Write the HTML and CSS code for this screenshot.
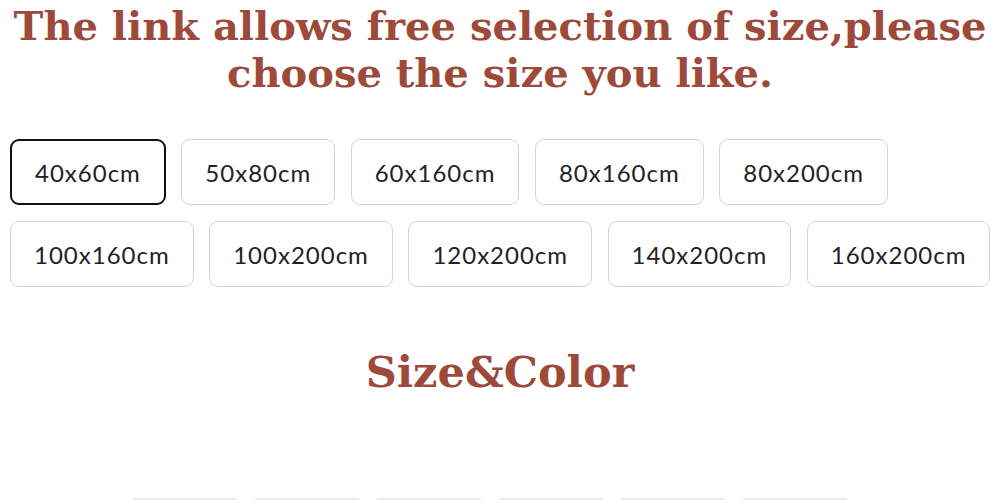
FILE: index.html
```html
<!DOCTYPE html>
<html lang="en">
<head>
    <meta charset="UTF-8">
    <title>Size selection</title>
    <link rel="stylesheet" href="styles.css">
</head>
<body>
    <div class="page">
        <!-- notice at the top -->
        <h1 class="notice">The link allows free selection of size,please<br>choose the size you like.</h1>

        <!-- size options -->
        <div class="sizes">
            <div class="size-row">
                <button class="size-btn active">40x60cm</button>
                <button class="size-btn">50x80cm</button>
                <button class="size-btn">60x160cm</button>
                <button class="size-btn">80x160cm</button>
                <button class="size-btn">80x200cm</button>
            </div>
            <div class="size-row">
                <button class="size-btn">100x160cm</button>
                <button class="size-btn">100x200cm</button>
                <button class="size-btn">120x200cm</button>
                <button class="size-btn">140x200cm</button>
                <button class="size-btn">160x200cm</button>
            </div>
        </div>

        <h2 class="section-title">Size&amp;Color</h2>

        <!-- tops of the swatches below -->
        <div class="swatches">
            <span class="swatch"></span>
            <span class="swatch"></span>
            <span class="swatch"></span>
            <span class="swatch"></span>
            <span class="swatch"></span>
            <span class="swatch"></span>
        </div>
    </div>
</body>
</html>
```

FILE: styles.css
```css
body {
    margin: 0;
    background: #fff;
}
.page {
    width: 1000px;
    height: 500px;
    overflow: hidden;
    display: flex;
    flex-direction: column;
}
.notice {
    margin: 2px 0 0;
    font-family: "DejaVu Serif", serif;
    font-weight: bold;
    font-size: 40px;
    line-height: 47px;
    text-align: center;
    color: #9e4a3b;
}
.sizes {
    margin: 43px 0 0 10px;
    display: flex;
    flex-direction: column;
    gap: 16px;
}
.size-row {
    display: flex;
    gap: 15.5px;
}
.size-btn {
    height: 66px;
    padding: 0 23px;
    background: #fff;
    border: 1.5px solid #d4d4d4;
    border-radius: 9px;
    font-family: Lato, sans-serif;
    font-size: 24px;
    letter-spacing: 1px;
    color: #222;
}
.size-btn.active {
    border: 2.5px solid #111;
}
.section-title {
    margin: 59px 0 0;
    font-family: "DejaVu Serif", serif;
    font-weight: bold;
    font-size: 43px;
    line-height: 52px;
    text-align: center;
    color: #9e4a3b;
}
.swatches {
    margin-top: auto;
    display: flex;
    justify-content: center;
    gap: 18px;
    padding-right: 20px;
}
.swatch {
    width: 104px;
    height: 2px;
    background: #ebe9e5;
}
```
